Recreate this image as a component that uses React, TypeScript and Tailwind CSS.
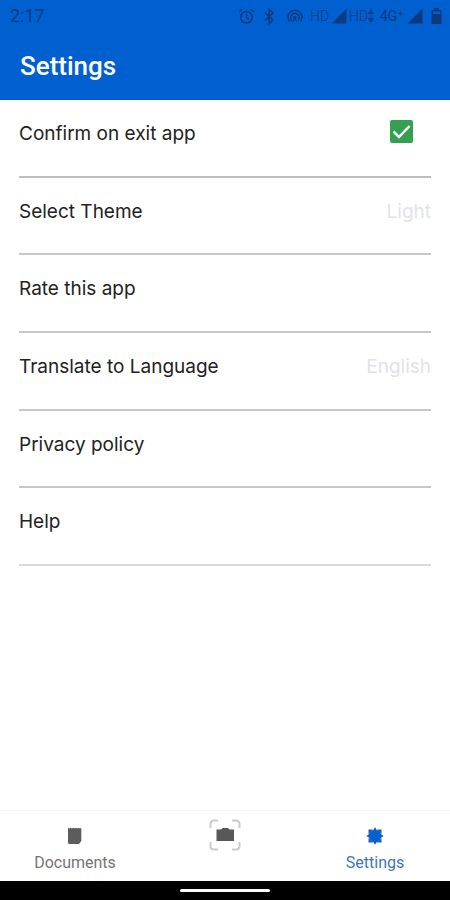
import React, { useState } from 'react';

const options = [
  { id: 'theme', label: 'Select Theme', value: 'Light' },
  { id: 'rate', label: 'Rate this app', value: '' },
  { id: 'language', label: 'Translate to Language', value: 'English' },
  { id: 'privacy', label: 'Privacy policy', value: '' },
  { id: 'help', label: 'Help', value: '' },
];

function SignalIcon() {
  return (
    <svg width="16" height="16" viewBox="0 0 16 16" fill="currentColor" aria-hidden="true">
      <path d="M15.5.5V15.5H.5z" />
    </svg>
  );
}

function StatusBar() {
  return (
    <div className="flex h-8 items-center justify-between pl-[10px] pr-2 font-['Roboto',sans-serif] text-[#0b3a80]">
      <span className="text-lg">2:17</span>
      <div className="flex items-center text-sm">
        <svg width="17" height="17" viewBox="0 0 17 17" fill="none" stroke="currentColor" strokeWidth="1.5" aria-hidden="true">
          <circle cx="8.5" cy="9.3" r="5.8" />
          <path d="M8.5 5.8v3.800l2.500 1.500M1 4l3.200-2.700M16 4l-3.200-2.700" />
        </svg>
        <svg className="ml-2" width="13" height="17" viewBox="0 0 13 17" fill="none" stroke="currentColor" strokeWidth="1.6" aria-hidden="true">
          <path d="M2 4.500l8 7.500-3.800 3.500v-14L10 5l-8 7.500" />
        </svg>
        <svg className="ml-[10px]" width="18" height="17" viewBox="0 0 18 17" fill="none" stroke="currentColor" strokeWidth="1.5" aria-hidden="true">
          <path d="M3.500 13.500a7 7 0 1 1 11 0M6 12.500a4.200 4.200 0 1 1 6 0" />
          <circle cx="9" cy="9.5" r="1" fill="currentColor" />
          <path d="M9 10L7 14M9 10l2 4" strokeWidth="1" />
        </svg>
        <span className="ml-[6px] w-[21px] font-light">HD</span>
        <SignalIcon />
        <span className="ml-[2px] w-[19px] font-light">HD</span>
        <svg width="6" height="14" viewBox="0 0 6 14" fill="currentColor" aria-hidden="true">
          <path d="M3 0l3 5H0zM3 14l3-5H0z" />
          <path d="M2 4h2v6H2z" opacity=".3" />
        </svg>
        <span className="ml-[6px] w-[27px]">4G⁺</span>
        <SignalIcon />
        <svg className="ml-2" width="11" height="16" viewBox="0 0 11 16" aria-hidden="true">
          <path d="M3 0h5v2h2.500v14H.5V2H3z" fill="currentColor" />
          <path d="M2 3.500h7v2.500H2z" fill="#0060cf" />
        </svg>
      </div>
    </div>
  );
}

function DocumentIcon() {
  return (
    <svg width="16" height="18" viewBox="0 0 16 18" fill="#5c5c5c" aria-hidden="true">
      <path d="M1 .8l1.200.7 1.300-.7 1.300.7 1.400-.7 1.400.7 1.400-.7 1.400.7 1.300-.7 1.300.7 1.300-.7V14L12 17H2.500Q1 17 1 15.500z" />
    </svg>
  );
}

function ScanIcon() {
  return (
    <svg width="32" height="32" viewBox="0 0 32 32" fill="none" aria-hidden="true">
      <path
        d="M1.500 9V5Q1.500 1.500 5 1.500H9M23 1.500h4Q30.500 1.500 30.500 5V9M30.500 23v4Q30.500 30.500 27 30.500H23M9 30.500H5Q1.500 30.500 1.500 27V23"
        stroke="#cbcbcb"
        strokeWidth="2"
      />
      <path d="M7.500 10.500h4.500L13.500 9h5.500l1.500 1.500h4.500V22H7.500z" fill="#585858" />
    </svg>
  );
}

function GearIcon() {
  return (
    <svg width="18" height="18" viewBox="0 0 18 18" fill="#0a5fcb" aria-hidden="true">
      <circle cx="9" cy="9" r="6.3" />
      <path d="M9 .3L11.300 4H6.700zM9 17.700L11.300 14H6.700zM.3 9L4 6.700v4.600zM17.700 9L14 6.700v4.600z" />
      <path d="M2.500 2.500h4.500L2.500 7zM15.500 2.500V7L11 2.500zM15.500 15.500H11l4.500-4.500zM2.500 15.500V11L7 15.500z" />
    </svg>
  );
}

export default function App() {
  const [confirmExit, setConfirmExit] = useState(true);

  return (
    <div className="flex min-h-screen flex-col bg-white">
      <header className="h-[100px] bg-[#0060cf]">
        <StatusBar />
        <h1 className="px-5 pt-[18px] font-['Roboto',sans-serif] text-[26px] leading-8 font-medium text-white">Settings</h1>
      </header>

      <main className="flex-1 px-[19px] font-['Inter',sans-serif] text-[19px] leading-7 text-[#222]">
        <ul className="grid h-[466px] auto-rows-fr">
          <li className="flex items-start justify-between border-b-2 border-[#bdbdbd] pt-5">
            <label htmlFor="confirm-exit">Confirm on exit app</label>
            <span className="relative mr-[18px] block size-[23px]">
              <input
                id="confirm-exit"
                type="checkbox"
                checked={confirmExit}
                onChange={(e) => setConfirmExit(e.target.checked)}
                className="block size-[23px] appearance-none rounded-xs border-2 border-[#35a052] checked:bg-[#35a052]"
              />
              {confirmExit && (
                <svg className="pointer-events-none absolute inset-0" width="23" height="23" viewBox="0 0 23 23" fill="none" aria-hidden="true">
                  <path d="M3.500 11.500l5.500 5.500L19.500 6" stroke="#fff" strokeWidth="2.5" />
                </svg>
              )}
            </span>
          </li>
          {options.map((option) => (
            <li key={option.id} className="border-b-2 border-[#c8c8c8] last:border-[#dadada]">
              <button type="button" className="flex h-full w-full items-start justify-between pt-5 text-left">
                <span>{option.label}</span>
                <span className="text-[#e2e2ee]">{option.value}</span>
              </button>
            </li>
          ))}
        </ul>
      </main>

      <nav className="grid h-[71px] grid-cols-3 border-t border-[#f4f4f4] font-['Roboto',sans-serif] text-base text-[#757575]">
        <button type="button" className="flex flex-col items-center pt-4">
          <DocumentIcon />
          <span className="mt-2 leading-5">Documents</span>
        </button>
        <button type="button" aria-label="Scan" className="flex flex-col items-center pt-2">
          <ScanIcon />
        </button>
        <button type="button" className="flex flex-col items-center pt-4 text-[#3b78b8]">
          <GearIcon />
          <span className="mt-2 leading-5">Settings</span>
        </button>
      </nav>
      <div className="flex h-[19px] items-center justify-center bg-black">
        <div className="h-[3px] w-[90px] rounded-full bg-white" />
      </div>
    </div>
  );
}
